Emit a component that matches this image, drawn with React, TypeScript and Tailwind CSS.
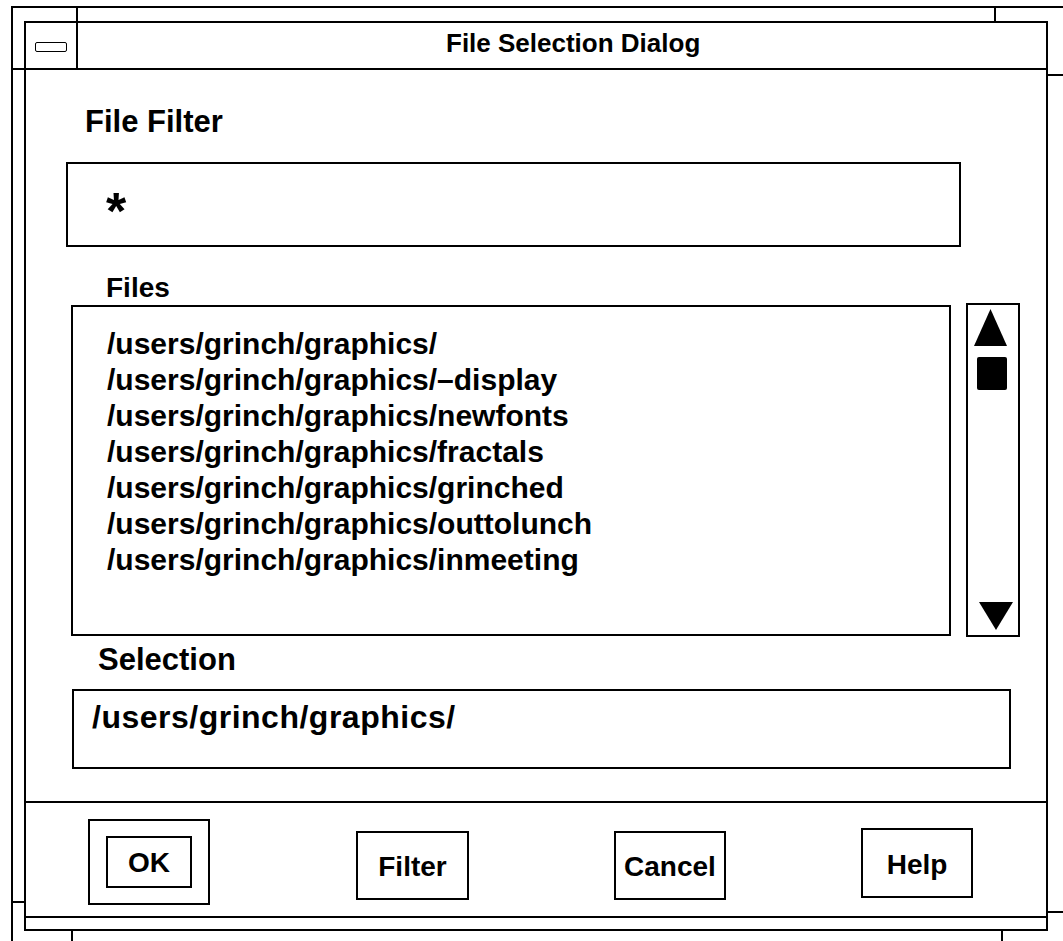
import React from "react";

const files = [
  "/users/grinch/graphics/",
  "/users/grinch/graphics/–display",
  "/users/grinch/graphics/newfonts",
  "/users/grinch/graphics/fractals",
  "/users/grinch/graphics/grinched",
  "/users/grinch/graphics/outtolunch",
  "/users/grinch/graphics/inmeeting",
];

function Tick({ cls }: { cls: string }) {
  return <div className={"absolute bg-black " + cls} />;
}

export default function App() {
  return (
    <div className="relative w-[1063px] h-[941px] overflow-hidden bg-white text-black font-bold font-['Liberation_Sans',Arial,sans-serif] pl-[11px] pt-[6px]">
      {/* outer resize frame */}
      <div className="w-[1100px] h-[1000px] border-l-2 border-t-2 border-black pl-[11px] pt-[13px]">
        {/* dialog */}
        <div className="w-[1024px] h-[910px] border-2 border-black flex flex-col">
          {/* title bar */}
          <div className="h-[47px] shrink-0 border-b-2 border-black flex">
            <div className="w-[52px] border-r-2 border-black flex items-center justify-center pt-[3px]">
              <div className="w-[32px] h-[10px] border-[1.5px] border-black rounded-[2px]" />
            </div>
            <div className="flex-1 flex items-center pl-[368px] pb-[6px] text-[26px] leading-[26px]">
              File Selection Dialog
            </div>
          </div>

          {/* body */}
          <div className="flex-1 flex flex-col">
            <div className="ml-[59px] mt-[36px] text-[31px] leading-[31px]">File Filter</div>
            <div className="ml-[40px] mt-[25px] w-[895px] h-[85px] border-2 border-black pl-[38px] pt-[22px] text-[52px] leading-[50px]">
              *
            </div>
            <div className="ml-[80px] mt-[27px] text-[28px] leading-[28px]">Files</div>
            <div className="ml-[45px] mt-[1px] flex items-center gap-[15px]">
              <div className="w-[880px] h-[331px] border-2 border-black pl-[34px] pt-[19px] text-[30px] leading-[36px]">
                {files.map((f) => (
                  <div key={f}>{f}</div>
                ))}
              </div>
              <div className="w-[54px] h-[334px] border-2 border-black">
                <svg width="50" height="330" viewBox="0 0 50 330">
                  <polygon points="22.5,4 39,41 6,41" fill="black" />
                  <rect x="9" y="52" width="30" height="33" rx="2" fill="black" />
                  <polygon points="11,297 45,297 28,325" fill="black" />
                </svg>
              </div>
            </div>
            <div className="ml-[72px] mt-[7px] text-[31px] leading-[31px]">Selection</div>
            <div className="ml-[46px] mt-[14px] w-[939px] h-[80px] border-2 border-black pl-[18px] pt-[10px] text-[32px] leading-[32px] tracking-[0.5px]">
              /users/grinch/graphics/
            </div>
          </div>

          {/* button area */}
          <div className="h-[117px] shrink-0 border-t-2 border-b-2 border-black flex items-start text-[28px] leading-[28px]">
            <div className="ml-[62px] mt-[16px] border-2 border-black px-[16px] py-[15px]">
              <div className="w-[86px] h-[52px] border-2 border-black flex items-center justify-center pt-[2px]">
                OK
              </div>
            </div>
            <div className="ml-[146px] mt-[28px] w-[113px] h-[69px] border-2 border-black flex items-center justify-center pt-[2px]">
              Filter
            </div>
            <div className="ml-[145px] mt-[28px] w-[112px] h-[69px] border-2 border-black flex items-center justify-center pt-[2px]">
              Cancel
            </div>
            <div className="ml-[135px] mt-[25px] w-[112px] h-[70px] border-2 border-black flex items-center justify-center pt-[3px]">
              Help
            </div>
          </div>
          <div className="h-[11px] shrink-0" />
        </div>
      </div>

      {/* frame handle ticks */}
      <Tick cls="left-[76px] top-[8px] w-[2px] h-[13px]" />
      <Tick cls="left-[13px] top-[68px] w-[11px] h-[2px]" />
      <Tick cls="left-[994px] top-[8px] w-[2px] h-[13px]" />
      <Tick cls="left-[1048px] top-[74px] w-[15px] h-[2px]" />
      <Tick cls="left-[13px] top-[901px] w-[11px] h-[2px]" />
      <Tick cls="left-[1048px] top-[911px] w-[15px] h-[2px]" />
      <Tick cls="left-[71px] top-[931px] w-[2px] h-[10px]" />
      <Tick cls="left-[1001px] top-[931px] w-[2px] h-[10px]" />
    </div>
  );
}
